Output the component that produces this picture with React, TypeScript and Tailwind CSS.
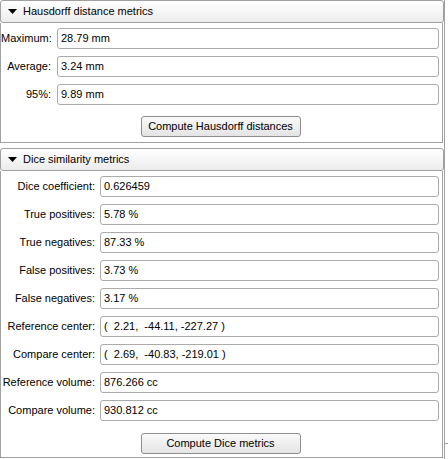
const hausdorff = [
  { label: 'Maximum:', value: '28.79 mm' },
  { label: 'Average:', value: '3.24 mm' },
  { label: '95%:', value: '9.89 mm' },
];

const dice = [
  { label: 'Dice coefficient:', value: '0.626459' },
  { label: 'True positives:', value: '5.78 %' },
  { label: 'True negatives:', value: '87.33 %' },
  { label: 'False positives:', value: '3.73 %' },
  { label: 'False negatives:', value: '3.17 %' },
  { label: 'Reference center:', value: '(  2.21,  -44.11, -227.27 )' },
  { label: 'Compare center:', value: '(  2.69,  -40.83, -219.01 )' },
  { label: 'Reference volume:', value: '876.266 cc' },
  { label: 'Compare volume:', value: '930.812 cc' },
];

const Header = ({ title }: { title: string }) => (
  <div className="w-[444px] h-[23px] border border-[#a0a0a0] rounded-[3px] bg-gradient-to-b from-white to-[#ececec] flex items-center">
    <svg width="9" height="6" viewBox="0 0 9 6" className="ml-[7px] mr-[6px]">
      <polygon points="0,0 9,0 4.5,5" fill="#000" />
    </svg>
    <span>{title}</span>
  </div>
)

const Field = ({ label, value, labelWidth, gap }: { label: string; value: string; labelWidth: string; gap: string }) => (
  <div className={`flex items-center h-[21px] ${gap}`}>
    <span className={`${labelWidth} text-right shrink-0 whitespace-nowrap`}>{label}</span>
    <div className="flex-1 h-[21px] border border-[#ababab] rounded-[3px] bg-white flex items-center pl-[3px] whitespace-pre">
      {value}
    </div>
  </div>
)

const Button = ({ text }: { text: string }) => (
  <div className="flex justify-center">
    <div className="ml-[1px] w-[160px] h-[21px] border border-[#8e8e8e] rounded-[3px] bg-gradient-to-b from-[#fafafa] to-[#e4e4e4] flex items-center justify-center">
      {text}
    </div>
  </div>
)

export default function App() {
  return (
    <div className="w-[448px] h-[459px] bg-white flex text-[11px] leading-none text-black font-['Liberation_Sans',Arial,sans-serif] overflow-hidden">
      <div className="w-[444px] flex flex-col">
        {/* Hausdorff section */}
        <Header title="Hausdorff distance metrics" />
        <div className="w-[443px] border-l border-r border-b border-[#a0a0a0] pt-[5px] pb-[5px] pr-[3px]">
          <div className="flex flex-col gap-[7px]">
            {hausdorff.map(f => (
              <Field key={f.label} label={f.label} value={f.value} labelWidth="w-[50px]" gap="gap-[6px]" />
            ))}
          </div>
          <div className="mt-[11px]">
            <Button text="Compute Hausdorff distances" />
          </div>
        </div>

        {/* Dice section */}
        <div className="mt-[5px]">
          <Header title="Dice similarity metrics" />
        </div>
        <div className="w-[443px] border-l border-r border-b border-[#a0a0a0] pt-[5px] pb-[3px] pr-[3px]">
          <div className="flex flex-col gap-[7px]">
            {dice.map(f => (
              <Field key={f.label} label={f.label} value={f.value} labelWidth="w-[94px]" gap="gap-[5px]" />
            ))}
          </div>
          <div className="mt-[12px]">
            <Button text="Compute Dice metrics" />
          </div>
        </div>
      </div>
      <div className="flex-1 border-l border-[#a0a0a0] flex flex-col">
        <div className="h-[443px]" />
        <div className="border-t border-[#a0a0a0]" />
      </div>
    </div>
  )
}
